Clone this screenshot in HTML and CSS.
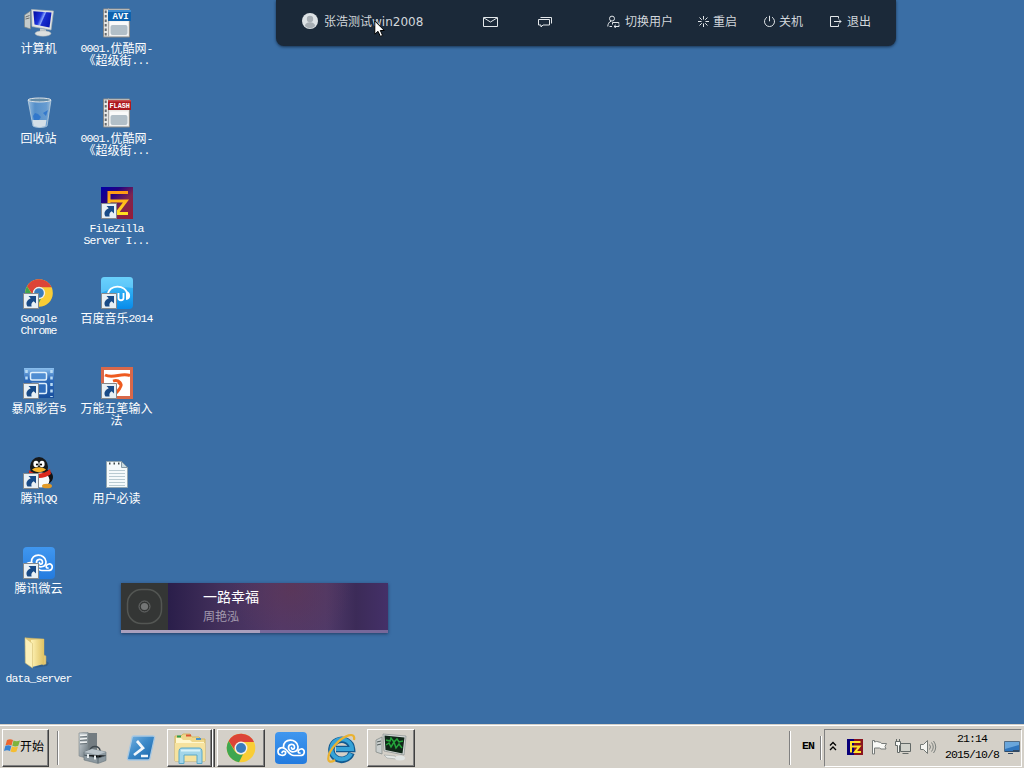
FILE: index.html
```html
<!DOCTYPE html>
<html lang="zh-CN">
<head>
<meta charset="utf-8">
<title>Desktop</title>
<link rel="stylesheet" href="styles.css">
</head>
<body>
<svg class="defs" width="0" height="0" aria-hidden="true">
  <defs>
    <linearGradient id="blue" x1="0" y1="0" x2="1" y2="1"><stop offset="0" stop-color="#78b4e2"/><stop offset=".45" stop-color="#3d8ac9"/><stop offset="1" stop-color="#1763a8"/></linearGradient>
    <linearGradient id="film5" x1="0" y1="0" x2="0" y2="1"><stop offset="0" stop-color="#8cc0ee"/><stop offset=".35" stop-color="#2f6cba"/><stop offset="1" stop-color="#184e9c"/></linearGradient>
    <linearGradient id="screen" x1="0" y1="0" x2="1" y2=".4"><stop offset="0" stop-color="#0009a0"/><stop offset=".45" stop-color="#1c33da"/><stop offset=".6" stop-color="#8ca6fb"/><stop offset=".66" stop-color="#1a2ecf"/><stop offset="1" stop-color="#0b1cb8"/></linearGradient>
    <linearGradient id="fold" x1="0" x2="1"><stop offset="0" stop-color="#fff3b5"/><stop offset="1" stop-color="#dfc263"/></linearGradient>
    <linearGradient id="fzbg" x1="0" y1="0" x2="1" y2="1"><stop offset="0" stop-color="#0000a8"/><stop offset=".3" stop-color="#240080"/><stop offset=".6" stop-color="#7e2450"/><stop offset="1" stop-color="#981c36"/></linearGradient>
    <linearGradient id="fzline" x1="0" y1="0" x2="0" y2="1"><stop offset="0" stop-color="#ff9a14"/><stop offset="1" stop-color="#ffe020"/></linearGradient>
    <linearGradient id="sky" x1="0" y1="0" x2="0" y2="1"><stop offset="0" stop-color="#4cc8fb"/><stop offset="1" stop-color="#078bea"/></linearGradient>
    <linearGradient id="cloudbg" x1="0" y1="0" x2="0" y2="1"><stop offset="0" stop-color="#4097ef"/><stop offset="1" stop-color="#237bdf"/></linearGradient>
    <linearGradient id="metal" x1="0" y1="0" x2="1" y2="1"><stop offset="0" stop-color="#d1d8dc"/><stop offset="1" stop-color="#68747b"/></linearGradient>
    <linearGradient id="bin" x1="0" x2="1"><stop offset="0" stop-color="#b4d4ef"/><stop offset=".3" stop-color="#5d9ad6"/><stop offset=".8" stop-color="#76abdf"/><stop offset="1" stop-color="#b8d2e6"/></linearGradient>
    <symbol id="shortcut" viewBox="0 0 16 16"><path fill="#e8f0f5" stroke="#85898c" d="M.5.5h15v15H.5z"/><path fill="#194b87" d="M5.500 3H13v7.500l-2.300-2.200C8.500 9.700 8 11 8.600 13.500H4.500C2.300 10 4 7 7.700 5.200z"/></symbol>
    <symbol id="chrome" viewBox="0 0 30 30"><circle cx="15" cy="15" r="14.300" fill="#f9cd36"/><path fill="#dc4437" d="M2.600 7.900A14.300 14.300 0 0 1 28 9H15a6.500 6.500 0 0 0-6.300 8z"/><path fill="#3fa650" d="M2.600 7.900 9 18.500a7 7 0 0 0 8 2.700l-4 8A14.300 14.300 0 0 1 2.600 7.900z"/><circle cx="15" cy="15" r="6.400" fill="#f1f0ec"/><circle cx="15" cy="15" r="5" fill="#397cbc"/></symbol>
    <symbol id="cloud" viewBox="0 0 32 32"><rect width="32" height="32" rx="4" fill="url(#cloudbg)"/><g fill="none" stroke="#fff" stroke-width="1.700" stroke-linecap="round"><path d="M8.500 15C8 6 22 6 23 14.500c.5 6.500-9 7-9.500 1.500-.3-4.500 6-5 6-.8 0 2.500-3 2.500-3 .5"/><path d="M7 20.500c1-2 4-1.500 3.600.7C9.600 24.500 3 24 3 19.500c0-4 5-5 8-2 2.500 2.500 4 6 8 6h6c5.500 0 5.500-7 1-6.500-3 .3-4 4-1 4"/></g></symbol>
    <symbol id="fz" viewBox="0 0 32 32"><path fill="url(#fzbg)" d="M0 0h32v32H0z"/><path fill="none" stroke="url(#fzline)" stroke-width="3" d="M27 5.500H8V25M8 14h17L15.500 26.500H27"/></symbol>
    <symbol id="film" viewBox="0 0 30 30"><path fill="#e7e7e5" stroke="#8a8a89" d="M1.500 1.500h26v28h-26z"/><path fill="none" stroke="#666b70" stroke-width="2" stroke-dasharray="2.500 2" d="M3.700 3v26"/><path stroke="#aaa" d="M6.500 1v28"/><path fill="#fafafa" d="M8 14h18v14H8z"/><rect x="8.500" y="17.500" width="17" height="10" rx="2" fill="#b2bfc8"/></symbol>
  </defs>
</svg>

<main class="desktop">
  <div class="icons">
    <div class="item"><svg class="pic" viewBox="0 0 32 32"><path fill="#c4cbcb" stroke="#7a8282" stroke-width=".7" d="m1.500 8 6-4v18l-6-2z"/><path stroke="#555" stroke-width=".8" d="m2.500 10 4-1.500M2.500 12l4-1"/><path fill="#e4e6e4" stroke="#a9b2b4" stroke-width=".7" d="m8.500 2.500 22 1.500-2.500 19-19-3.500z"/><path fill="url(#screen)" d="m10.300 4.300 18.200 1.200-2 15-15-3z"/><path fill="#c7cdcf" d="m17 21.500 6 1v4h-6z"/><ellipse cx="20" cy="26.500" rx="8" ry="2.800" fill="#dde0df" stroke="#a5adb0" stroke-width=".5"/></svg><div class="label">计算机</div></div>
    <div class="item"><svg class="pic" viewBox="0 0 32 32"><use href="#film" x="1" y="0" width="30" height="31"/><path fill="#0d62ae" d="M7 3h23v11H7z"/><path fill="#3c8bd0" d="M7 3h23v2H7z"/><text class="avi" x="11.500" y="11.500">AVI</text></svg><div class="label"><span class="lat">0001.</span>优酷网<span class="lat">-</span><br>《超级街<span class="lat">...</span></div></div>

    <div class="item"><svg class="pic" viewBox="0 0 32 32"><path fill="url(#bin)" fill-opacity=".75" stroke="#b9cedd" stroke-width=".8" d="M5 3h23l-4 26c-3 2-11 2-14 0z"/><ellipse cx="16.500" cy="3" rx="11.500" ry="2" fill="#648ca8" stroke="#e1e5e8"/><path fill="#d4dfe7" d="M9.500 23h14l-1 6c-3 1.500-9 1.500-12 0z"/><path fill="#2c73cb" opacity=".85" d="m10 19 2-3 3 1 3 3-2 3h-5zM20 16l5-3-2 6z"/></svg><div class="label">回收站</div></div>
    <div class="item"><svg class="pic" viewBox="0 0 32 32"><use href="#film" x="1" y="0" width="30" height="31"/><path fill="#ad191e" d="M7 3h23v10H7z"/><path fill="#c64a4a" d="M7 3h23v1.500H7z"/><text class="flash" x="8.500" y="11">FLASH</text></svg><div class="label"><span class="lat">0001.</span>优酷网<span class="lat">-</span><br>《超级街<span class="lat">...</span></div></div>

    <div class="item"></div>
    <div class="item"><svg class="pic" viewBox="0 0 32 32"><use href="#fz" width="32" height="32"/><use href="#shortcut" x="0" y="16" width="16" height="16"/></svg><div class="label"><span class="lat">FileZilla<br>Server I...</span></div></div>

    <div class="item"><svg class="pic" viewBox="0 0 32 32"><use href="#chrome" x="1.500" y="1.500" width="29" height="29"/><use href="#shortcut" x="0" y="16" width="16" height="16"/></svg><div class="label"><span class="lat">Google<br>Chrome</span></div></div>
    <div class="item"><svg class="pic" viewBox="0 0 32 32"><rect width="32" height="32" rx="4" fill="url(#sky)"/><path fill="#8fdcfd" opacity=".45" d="M3 0h26q3 0 3 3v8Q16 8 0 16V3q0-3 3-3z"/><path fill="none" stroke="#fff" stroke-width="1.800" d="M7 18c0-11 18-11 19.500-1M17.500 16v5c0 3 5 3 5 0v-5M14 16v7"/><path fill="#fff" d="M25 14c5 0 6 9 0 9zM8 15c-3 1-3 6 0 7z"/><use href="#shortcut" x="0" y="16" width="16" height="16"/></svg><div class="label">百度音乐<span class="lat">2014</span></div></div>

    <div class="item"><svg class="pic" viewBox="0 0 32 32"><path fill="url(#film5)" d="M1 1h30v30H1z"/><path fill="none" stroke="#b9dbf4" stroke-width="2.500" stroke-dasharray="3 3.500" d="M3.500 3v25M28.500 3v27"/><rect x="7.500" y="5.500" width="16" height="7.500" rx="1.500" fill="#4f8dd2" stroke="#e0f0fc" stroke-width="1.500"/><rect x="7.500" y="16.500" width="16" height="10" rx="1.500" fill="#2f6cba" stroke="#e0f0fc" stroke-width="1.500"/><use href="#shortcut" x="0" y="16" width="16" height="16"/></svg><div class="label">暴风影音<span class="lat">5</span></div></div>
    <div class="item"><svg class="pic" viewBox="0 0 32 32"><path fill="#fff" stroke="#d8684a" stroke-width="3" d="M1.500 1.500h29v29h-29z"/><path fill="none" stroke="#ee5b20" stroke-width="3" d="M4 8c4 2 8 1.500 13 .500s9-1 12 0"/><path fill="none" stroke="#ee5b20" stroke-width="2.800" d="M12 14c6-2 10 3 7 7-1 2-3 4-5 6M17 15c2 2 3 3 4 4"/><use href="#shortcut" x="0" y="16" width="16" height="16"/></svg><div class="label">万能五笔输入<br>法</div></div>

    <div class="item"><svg class="pic" viewBox="0 0 32 32"><ellipse cx="17" cy="20" rx="13" ry="9" fill="#101214"/><ellipse cx="16" cy="10" rx="9" ry="10" fill="#17191b"/><ellipse cx="18" cy="23" rx="8.500" ry="7.500" fill="#f8fafa"/><path fill="#dc291c" d="M6 13c5 5 15 5 21-1l1 5c-7 5-15 5-22 1z"/><ellipse cx="13" cy="7" rx="2.600" ry="3.200" fill="#fff"/><ellipse cx="19" cy="7" rx="2.600" ry="3.200" fill="#fff"/><circle cx="14" cy="7.500" r="1.100"/><circle cx="18" cy="7.500" r="1.100"/><path fill="#f6b42a" d="M9 12.500c4-3 10-3 14 0-4 3.500-10 3.500-14 0z"/><ellipse cx="24" cy="29" rx="5" ry="2.300" fill="#e29a27"/><use href="#shortcut" x="0" y="16" width="16" height="16"/></svg><div class="label">腾讯<span class="lat">QQ</span></div></div>
    <div class="item"><svg class="pic" viewBox="0 0 32 32"><path fill="#f5fafb" stroke="#92a6b0" d="M5.500 4.500h15l6 6v20h-21z"/><path fill="#c9dbe2" stroke="#8599a5" d="M20.500 4.500v6h6z"/><path stroke="#b9cbd2" d="M8 13.500h16M8 16.500h16M8 19.500h16M8 22.500h16M8 25.500h16M8 28.500h16"/><path stroke="#3e484b" stroke-width="2" stroke-dasharray="1.500 3" d="M8 6.500h12"/></svg><div class="label">用户必读</div></div>

    <div class="item"><svg class="pic" viewBox="0 0 32 32"><use href="#cloud" width="32" height="32"/><use href="#shortcut" x="0" y="16" width="16" height="16"/></svg><div class="label">腾讯微云</div></div>
    <div class="item"></div>
    <div class="item"><svg class="pic" viewBox="0 0 32 32"><path fill="#24415a" opacity=".35" d="m11 31 12-7 3 2-2 3z"/><path fill="#e2c877" stroke="#c1aa62" stroke-width=".5" d="M2 .8 21 2v16l2 1v8l-3 1z"/><path fill="url(#fold)" d="m8 3 13-1v25l-12 3z"/><path fill="#fbf0b9" stroke="#d5bf76" stroke-width=".6" d="m2 .8 7.500 5.700V31L2.300 26z"/></svg><div class="label"><span class="lat">data_server</span></div></div>
    <div class="item"></div>
  </div>

  <section class="player">
    <div class="disc"><svg width="47" height="47" viewBox="0 0 47 47"><rect x="6.500" y="6.500" width="34" height="34" rx="14" fill="none" stroke="#535653" stroke-width="1.500"/><circle cx="23.500" cy="23.500" r="5.500" fill="none" stroke="#6a6c6c"/><circle cx="23.500" cy="23.500" r="3.600" fill="#747676"/></svg></div>
    <div class="song"><div class="title">一路幸福</div><div class="artist">周艳泓</div></div>
    <div class="progress"><div class="played"></div></div>
  </section>

  <header class="session">
    <div class="user"><svg width="16" height="16" viewBox="0 0 16 16"><circle cx="8" cy="8" r="8" fill="#dde2e5"/><circle cx="8" cy="6" r="3.200" fill="#a6adb3"/><path fill="#a6adb3" d="M3 13c0-5 10-5 10 0-3 3-7 3-10 0z"/></svg><span>张浩测试win2008</span></div>
    <svg class="mail" width="15" height="12" viewBox="0 0 15 12"><path d="M.5 1.500h14v9H.5zM1 2l6.500 4L14 2"/></svg>
    <svg class="chat" width="15" height="12" viewBox="0 0 15 12"><path d="M.5 3.500h11v5.500H5L3 11V9H.5zM2.500 1.500h11V7.500"/></svg>
    <div class="actions">
      <div class="action switch"><svg width="13" height="13" viewBox="0 0 13 13"><circle cx="5" cy="3.600" r="2.500"/><path d="M.8 11.500C.8 9 2 7 4 6.200M5 11.500H2.500M5.500 9.500V7.500h6.300v1.300M12 9.500v2H7M8.800 9.800 7 11.500l1.800 1.300"/></svg><span>切换用户</span></div>
      <div class="action restart"><svg width="13" height="13" viewBox="0 0 13 13"><path d="M6.500 1v3.500M6.500 8.500V12M1 6.500h3.500M8.500 6.500H12M2.500 2.500 4.800 4.800M8.200 8.200l2.300 2.300M10.500 2.500 8.200 4.800M4.800 8.200l-2.300 2.300"/></svg><span>重启</span></div>
      <div class="action power"><svg width="13" height="13" viewBox="0 0 13 13"><path d="M6.500.8v5.500M4 2.200a5 5 0 1 0 5 0"/></svg><span>关机</span></div>
      <div class="action leave"><svg width="13" height="13" viewBox="0 0 13 13"><path d="M9.500 3.500v-2h-8v10h8v-2M5 6.500h7M10 4.500l2 2-2 2"/></svg><span>退出</span></div>
    </div>
  </header>
  <svg class="cursor" width="12" height="19" viewBox="0 0 12 19"><path fill="#fff" stroke="#000" d="M.8 1v13.200L4 11.300l2.400 5.100 2.200-1-2.300-4.900h4z"/></svg>
</main>

<footer class="taskbar">
  <div class="start"><svg width="16" height="16" viewBox="0 0 16 16"><path fill="#eb652f" d="M3 2c2-1 4-1 6 0L7.500 7.500C6 6.500 4 6.500 1.500 7.500z"/><path fill="#7eb33c" d="M9.500 2.500c2 1 4 1 6.500 0l-1.700 5.300c-2 1-4 1-6 0z"/><path fill="#3783d3" d="M1.300 8c2-1 4-1 6 0l-1.300 5c-2-1-4-1-6 0z"/><path fill="#f5bd31" d="M8 8.500c2 1 4 1 6 0l-1.500 5c-2 1-4 1-6 0z"/></svg><span>开始</span></div>
  <div class="rule"></div>
  <nav class="apps">
    <div class="app"><svg width="32" height="32" viewBox="0 0 32 32"><path fill="#737c81" d="M13 1h9v22h-9z"/><path fill="url(#metal)" stroke="#7d868b" stroke-width=".6" d="m4 1 9-1v25l-4 .5L4 24z"/><path stroke="#f0f3f3" stroke-width="1.600" d="m5 3.500 7-.5M5 7l7-.5M5 10.500l7-.5"/><path stroke="#5c666b" stroke-width=".8" d="m5 5 7-.5M5 8.500l7-.5M5 12l7-.5"/><path fill="none" stroke="#3d474d" stroke-width="1.600" d="M15 19c0-6 10-6 10 0"/><path fill="#8c989f" stroke="#66737a" stroke-width=".6" d="m9 20 8-3 14 3v8.500L23 31.500 9 28z"/><path fill="#b9c3c9" d="m9 20 8-3 14 3-8 3z"/><path stroke="#4c5b63" stroke-width=".8" d="m9 23 14 3 8-2.500M23 23v8"/><path fill="#e7edef" d="M12 22h2v4h-2zM19 23.500h2v4h-2z"/></svg></div>
    <div class="app"><svg width="32" height="32" viewBox="0 0 32 32"><path fill="url(#blue)" stroke="#a8c8e2" stroke-width="1.300" d="M9 4h19c1 0 2 1 1.500 2L25 26c0 1-1 2-2 2H4c-1 0-2-1-1.500-2L7 6c0-1 1-2 2-2z"/><path fill="none" stroke="#f2f7fb" stroke-width="2.700" d="m12 9 6 7-9 7M16 24h7"/></svg></div>
    <div class="app open stacked"><svg width="34" height="32" viewBox="0 0 34 32"><path fill="#efd78c" stroke="#d4b764" d="M2 4h6l2-2h7l2 3h7l2 2h4v22H2z"/><path fill="#fff7cf" d="M3 6h5l2 2h7l2 2h12v4H3z"/><path fill="#f6e29e" d="M2 11h30v18H2z"/><path stroke="#2b9c50" stroke-width="2" d="M4 4.500h4"/><path stroke="#dc5536" stroke-width="2" d="M13 3.500h5"/><path stroke="#4a94c9" stroke-width="2" d="M23 7h5"/><path fill="#a2d5e9" stroke="#5ba9c8" d="M6 20c0-3 1-4 3-4h17c2 0 3 1 3 4v11.500h-5V23H11v8.500H6z"/><path stroke="#d8f2f9" stroke-width="2" d="M8 18.500h19"/></svg></div>
    <div class="app open"><svg width="30" height="30"><use href="#chrome" width="30" height="30"/></svg></div>
    <div class="app"><svg width="32" height="32"><use href="#cloud" width="32" height="32"/></svg></div>
    <div class="app"><svg width="32" height="32" viewBox="0 0 32 32"><path fill="none" stroke="#12598f" stroke-width="6.500" d="M26.500 21A10.300 10 0 1 1 27 17H11"/><path fill="none" stroke="#36a3d8" stroke-width="4" d="M26 21.500A10.300 10 0 1 1 27 17H11"/><path fill="none" stroke="#eab230" stroke-width="2.200" d="M29 8c2-9-10-5-19 5S1 34 10 28"/></svg></div>
    <div class="app open"><svg width="32" height="32" viewBox="0 0 32 32"><path fill="#c9cecd" stroke="#7c8483" stroke-width=".7" d="m1 8 6-3v17l-6-2z"/><path stroke="#505957" d="m2 10 4-1M2 13l4-1"/><path fill="#d9dcdb" stroke="#878e8e" stroke-width=".7" d="m8 2 23 2-2 19-20-4z"/><path fill="#112719" d="m9.500 3.500 20 2-2 16-17-3.500z"/><path fill="none" stroke="#24a33b" stroke-width="1.500" d="m11 8 4 1 1-3 3 4 3-3 2 3 4-1M11 13l3-2 2 4 3-5 2 6 3-4 3 4"/><path fill="#e6e9e7" stroke="#9ca3a1" stroke-width=".6" d="m9 23 11 1 2 3-10-1z"/><ellipse cx="25" cy="26" rx="5" ry="2.500" fill="#e0e4e3"/></svg></div>
  </nav>
  <div class="rule notify"></div>
  <div class="lang">EN</div>
  <div class="rule short"></div>
  <div class="tray">
    <svg class="more" width="8" height="12" viewBox="0 0 8 12"><path fill="none" stroke="#000" stroke-width="1.300" d="m1 4.500 3-3 3 3M1 9l3-3 3 3"/></svg>
    <svg width="16" height="16" viewBox="0 0 16 16"><path fill="#090079" d="M0 0h7v16H0z"/><path fill="#8a141d" d="M7 0h9v16H7z"/><path fill="none" stroke="#ffe52c" stroke-width="2" d="M13.500 3H4v10.500M4 7.500h8.500L8 13h6"/></svg>
    <svg width="16" height="16" viewBox="0 0 16 16"><path fill="#f9f9f6" stroke="#777b79" d="M1.500 1.500h2V3c3-1.500 4 .5 6 .3l1 1.200h5l-1.500 3 1 2.500H10L8.500 9h-5v6h-2z"/></svg>
    <svg width="17" height="16" viewBox="0 0 17 16"><path fill="#d1d2cb" stroke="#636967" d="M5.500 4.500h10v8h-10zM7.500 14.500h6"/><path fill="#f6f7f4" stroke="#636967" d="M.5 2.500h5v4h-1v7h-2v-7h-2z"/><path stroke="#636967" d="M1.500 0v2.500M4.500 0v2.500"/></svg>
    <svg width="17" height="16" viewBox="0 0 17 16"><path fill="#f5f5f1" stroke="#737875" d="M.5 5.500h3l4-4v13l-4-4h-3z"/><path fill="none" stroke="#7b807d" d="M9.500 5.500q2 2.500 0 5M11.500 3.500q3.500 4.500 0 9M13.500 2q4.500 6 0 12"/></svg>
    <div class="clock"><div>21:14</div><div>2015/10/8</div></div>
    <svg class="show" width="16" height="16" viewBox="0 0 16 16"><path fill="#2f75bd" stroke="#536c84" d="M.5 2.500h15v10H.5z"/><path fill="#69a6dc" d="M1 3h14v3L1 10z"/><path fill="#304a66" d="M1 12h14v1H1zM9 11h6v2H9zM4 14h5v1H4z"/></svg>
  </div>
</footer>
</body>
</html>
```

FILE: styles.css
```css
* { box-sizing: border-box; }

body {
  margin: 0;
  width: 1024px;
  height: 768px;
  overflow: hidden;
  display: flex;
  flex-direction: column;
  background: #3a6ea5;
  font-family: "DejaVu Sans", "Noto Sans CJK SC", sans-serif;
  font-size: 12px;
}

svg { display: block; flex: none; }
.defs { position: absolute; }

.desktop {
  position: relative;
  flex: 1;
  min-height: 0;
}

.icons {
  display: grid;
  grid-template-columns: 78px 78px;
  grid-auto-rows: 90px;
  padding-top: 7px;
}

.item {
  display: flex;
  flex-direction: column;
  align-items: center;
}

.pic { width: 32px; height: 32px; }

.label {
  margin-top: 3px;
  padding-right: 1px;
  color: #fff;
  font-family: "Noto Sans CJK SC", sans-serif;
  font-size: 12px;
  line-height: 12px;
  text-align: center;
  white-space: nowrap;
}

/* Half-width cells: each Latin character takes 6px */
.lat {
  font-family: "Liberation Mono", monospace;
  font-size: 11.500px;
  line-height: 0;
  letter-spacing: -.9px;
  vertical-align: 1px;
}

.avi, .flash {
  fill: #fff;
  font-family: "Liberation Mono", monospace;
  font-weight: bold;
  font-size: 9px;
}

.flash { font-size: 6.800px; }

/* Music widget floating over the wallpaper */
.player {
  position: absolute;
  left: 121px;
  top: 583px;
  width: 267px;
  height: 50px;
  display: grid;
  grid-template-columns: 47px 1fr;
  grid-template-rows: 47px 3px;
  background:
    radial-gradient(circle at 170px 5px, rgba(92, 54, 86, .8) 0, rgba(92, 54, 86, 0) 60px),
    linear-gradient(90deg, #2a1e4a 47px, #43305b 100px, #51396a 160px, #503a69 205px, #3c2b58 235px, #443068);
  box-shadow: 0 1px 3px rgba(20, 30, 60, .6);
}

.disc { background: #343635; }

.song { padding: 5px 0 0 35px; }

.title {
  color: #fff;
  font-size: 14px;
  line-height: 18px;
}

.artist {
  color: #a29aae;
  font-size: 12px;
  line-height: 22px;
}

.progress { grid-column: 1 / 3; background: #77689a; }
.played { width: 139px; height: 3px; background: #aaa0bd; }

/* Session bar overlaying the top edge */
.session {
  position: absolute;
  left: 276px;
  top: 0;
  width: 620px;
  height: 46px;
  padding: 0 25px 4px 26px;
  display: flex;
  align-items: center;
  background: #1b2939;
  color: #d2d7dc;
  border-radius: 0 0 8px 8px;
  box-shadow: 0 1px 3px rgba(10, 25, 45, .7);
  white-space: nowrap;
}

.session span { margin-top: -2px; }

.user { display: flex; align-items: center; gap: 6px; width: 181px; }

.session path:not([fill]),
.session circle:not([fill]) { fill: none; stroke: #e3e7ea; stroke-width: 1; }

.mail { margin-top: 1px; }
.chat { margin: 1px 0 0 40px; }
.actions { display: flex; margin-left: auto; }
.action { display: flex; align-items: center; }
.switch { gap: 5px; }
.restart { margin-left: 24px; gap: 3px; }
.power { margin-left: 26px; gap: 3px; }
.leave { margin-left: 26px; gap: 5px; }

.cursor { position: absolute; left: 374px; top: 20px; }

.taskbar {
  height: 44px;
  flex: none;
  display: flex;
  align-items: center;
  padding: 3px 2px 0;
  background: #d4d0c8;
  box-shadow: inset 0 1px #d4d0c8, inset 0 2px #fff;
  color: #000;
}

.start {
  display: flex;
  align-items: center;
  width: 47px;
  height: 38px;
  padding: 0 0 4px 1px;
  border: 1px solid;
  border-color: #fff #404040 #404040 #fff;
  box-shadow: inset -1px -1px #808080;
}

.rule {
  width: 2px;
  height: 34px;
  margin: 0 9px 0 8px;
  border-left: 1px solid #808080;
  border-right: 1px solid #fff;
}

.rule.notify { margin: 0 11px 0 auto; }
.rule.short { height: 24px; margin: 0 2px 0 5px; }
.apps { display: flex; }

.app {
  display: flex;
  align-items: center;
  justify-content: center;
  width: 48px;
  height: 38px;
  margin-right: 2px;
  border: 1px solid transparent;
}

.app:first-child { margin-left: -1px; }

.open {
  border-color: #fff #404040 #404040 #fff;
  box-shadow: inset -1px -1px #808080;
}

.stacked {
  width: 45px;
  margin-right: 5px;
  box-shadow: inset -1px -1px #808080, 1px 0 #fff, 2px 0 #808080, 3px 0 #404040;
}

.lang {
  width: 13px;
  padding-bottom: 4px;
  font: bold 11.500px/12px "Liberation Mono", monospace;
  letter-spacing: -.9px;
}

.tray {
  display: flex;
  align-items: center;
  gap: 8px;
  width: 198px;
  height: 38px;
  padding: 0 0 2px 4px;
  border: 1px solid;
  border-color: #808080 #fff #fff #808080;
}

.tray .more { margin-right: 1px; }
.tray .more + svg { margin-left: 1px; }

.clock {
  width: 56px;
  font: 11.500px/16px "Liberation Mono", monospace;
  letter-spacing: -.9px;
  text-align: center;
  margin: 0 -6px 0 -1px;
}

.show { margin-left: 2px; }
```
